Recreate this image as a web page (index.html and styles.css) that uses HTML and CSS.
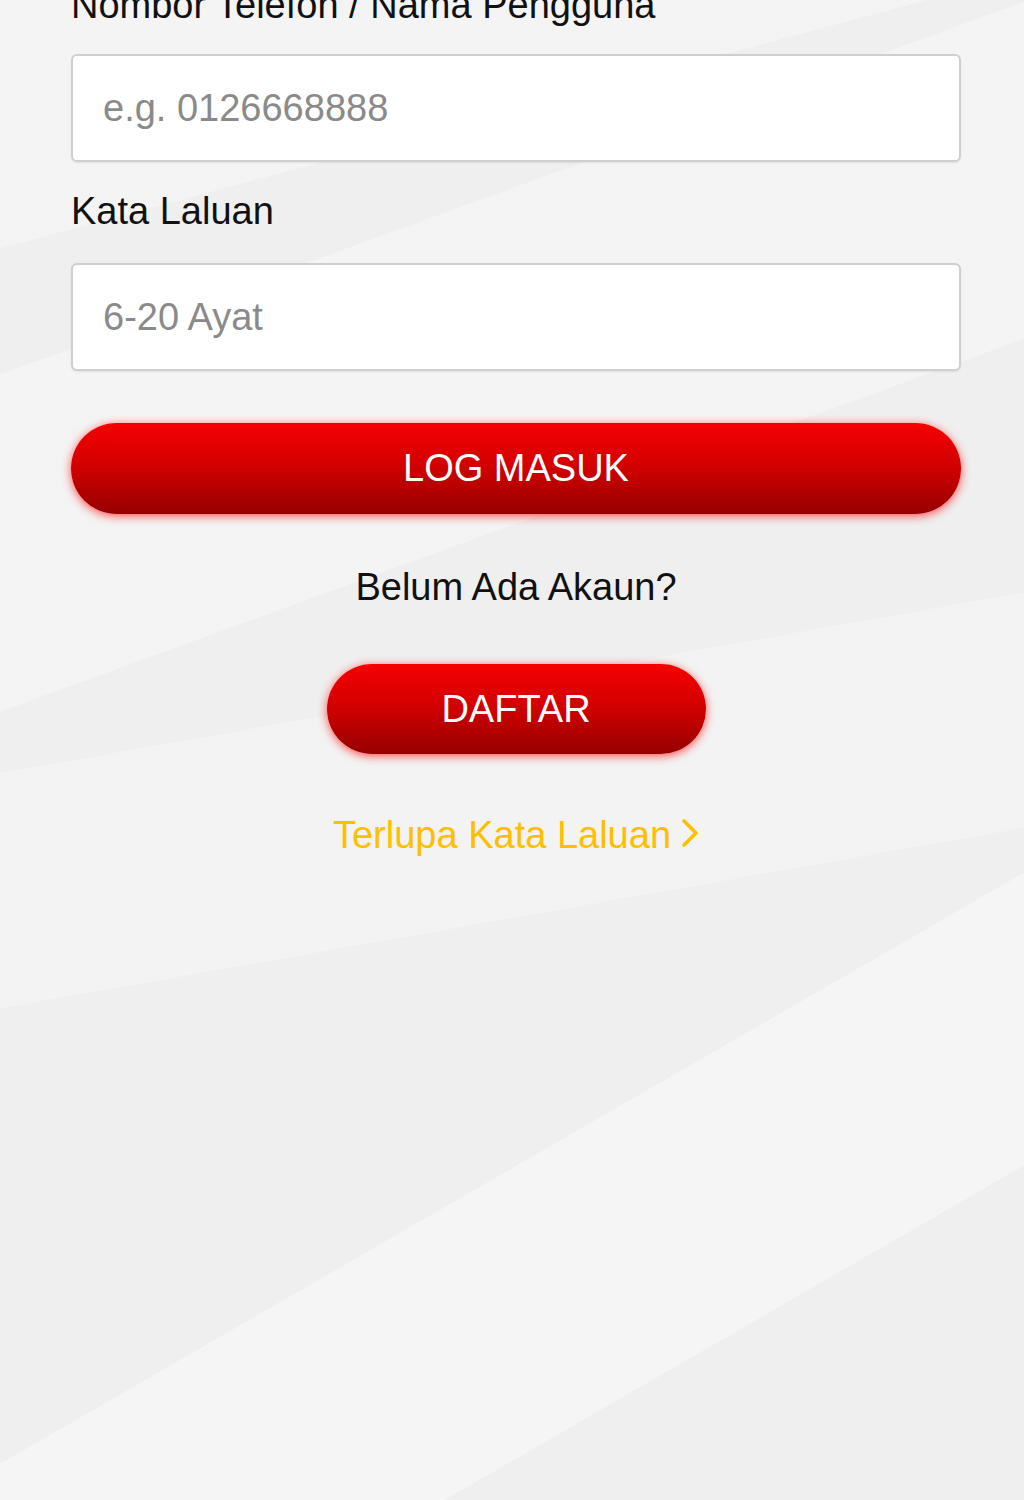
FILE: index.html
```html
<!DOCTYPE html>
<html lang="ms">
<head>
    <meta charset="UTF-8">
    <meta name="viewport" content="width=device-width, initial-scale=1.0">
    <title>Log Masuk</title>
    <link rel="stylesheet" href="styles.css">
</head>
<body>
    <form class="login-form" onsubmit="return false">
        <label class="field-label" for="username">Nombor Telefon / Nama Pengguna</label>
        <input class="field-input" type="text" id="username" placeholder="e.g. 0126668888">

        <label class="field-label field-label-gap" for="password">Kata Laluan</label>
        <input class="field-input" type="password" id="password" placeholder="6-20 Ayat">

        <button type="submit" class="btn-red btn-login">LOG MASUK</button>

        <p class="no-account">Belum Ada Akaun?</p>

        <div class="register-row">
            <button type="button" class="btn-red btn-register">DAFTAR</button>
        </div>

        <a href="#" class="forgot-link">Terlupa Kata Laluan
            <svg class="chevron" width="18" height="30" viewBox="0 0 18 30">
                <polyline points="3,3 15,15 3,27" fill="none" stroke="#ffbf00" stroke-width="3.6" stroke-linecap="round" stroke-linejoin="round"/>
            </svg>
        </a>
    </form>
</body>
</html>
```

FILE: styles.css
```css
html, body {
    height: 100%;
}
body {
    margin: 0;
    font-family: 'Liberation Sans', Arial, sans-serif;
    color: #111;
    background-color: #efefef;
    /* soft diagonal light bands */
    background-image:
        linear-gradient(330deg, transparent 0, transparent 16%, rgba(255,255,255,0.4) 16%, rgba(255,255,255,0.4) 30%, transparent 30%),
        linear-gradient(350deg, transparent 0, transparent 40%, rgba(255,255,255,0.25) 40%, rgba(255,255,255,0.25) 54%, transparent 54%),
        linear-gradient(340deg, transparent 0, transparent 62%, rgba(255,255,255,0.3) 62%, rgba(255,255,255,0.3) 80%, transparent 80%),
        linear-gradient(345deg, transparent 0, transparent 86%, rgba(255,255,255,0.3) 86%);
    overflow: hidden;
}
.login-form {
    width: 890px;
    margin: -17px 0 0 71px;
    display: flex;
    flex-direction: column;
}
.field-label {
    display: block;
    font-size: 38px;
    line-height: 44px;
    color: #111;
    margin-bottom: 27px;
}
.field-label-gap {
    margin-top: 27px;
    margin-bottom: 30px;
}
.field-input {
    box-sizing: border-box;
    width: 100%;
    height: 108px;
    padding: 0 30px;
    border: 2px solid #cfcfcf;
    border-radius: 6px;
    background: #fff;
    box-shadow: 0 1px 2px rgba(0, 0, 0, 0.08);
    font-family: 'Liberation Sans', Arial, sans-serif;
    font-size: 38px;
    color: #333;
    outline: none;
}
.field-input::placeholder {
    color: #8a8a8a;
}
.btn-red {
    border: none;
    border-radius: 46px;
    background: linear-gradient(to bottom, #f50000 0%, #d40000 45%, #960000 100%);
    box-shadow: 0 2px 10px rgba(255, 20, 20, 0.75);
    color: #fff;
    font-family: 'Liberation Sans', Arial, sans-serif;
    font-size: 38px;
    cursor: pointer;
}
.btn-login {
    width: 100%;
    height: 91px;
    margin-top: 52px;
}
.no-account {
    margin: 51px 0 0;
    font-size: 38px;
    line-height: 44px;
    text-align: center;
}
.register-row {
    display: flex;
    justify-content: center;
    margin-top: 55px;
}
.btn-register {
    width: 379px;
    height: 90px;
}
.forgot-link {
    align-self: center;
    display: flex;
    align-items: center;
    gap: 10px;
    margin-top: 59px;
    font-size: 38px;
    line-height: 44px;
    color: #ffbf00;
    text-decoration: none;
}
.chevron {
    margin-top: -4px;
}
```
